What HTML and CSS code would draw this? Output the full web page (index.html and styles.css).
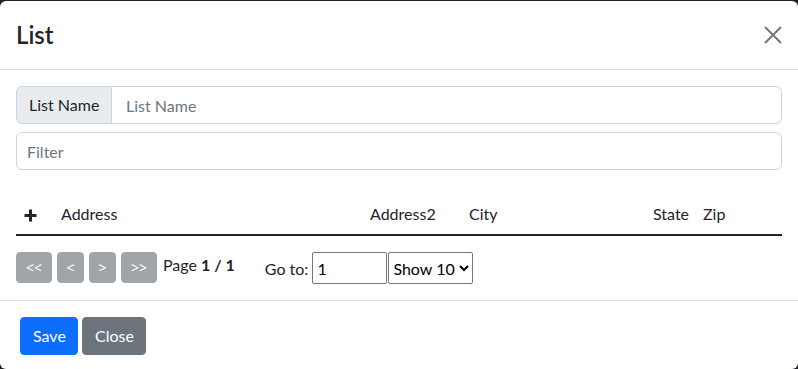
FILE: index.html
```html
<!DOCTYPE html>
<html lang="en">
<head>
<meta charset="utf-8">
<title>List</title>
<link rel="stylesheet" href="styles.css">
</head>
<body>
<div class="modal">
  <div class="modal-header">
    <h4 class="modal-title">List</h4>
    <button class="btn-close" type="button" aria-label="Close">
      <svg width="18" height="18" viewBox="0 0 18 18"><path d="M1 1L17 17M17 1L1 17" stroke="#757575" stroke-width="2" fill="none"/></svg>
    </button>
  </div>
  <div class="modal-body">
    <div class="input-group">
      <span class="input-group-text">List Name</span>
      <input class="form-control grow" type="text" placeholder="List Name">
    </div>
    <input class="form-control filter" type="text" placeholder="Filter">
    <table class="table">
      <thead>
        <tr>
          <th class="c-add"><svg class="plus" width="13" height="13" viewBox="0 0 13 13"><path d="M6.5 0.5V12.5M0.5 6.5H12.5" stroke="#212529" stroke-width="3" fill="none"/></svg></th>
          <th class="c-address">Address</th>
          <th class="c-address2">Address2</th>
          <th class="c-city">City</th>
          <th class="c-state">State</th>
          <th class="c-zip">Zip</th>
        </tr>
      </thead>
    </table>
    <div class="pager">
      <button class="btn-sm" disabled>&lt;&lt;</button>
      <button class="btn-sm" disabled>&lt;</button>
      <button class="btn-sm" disabled>&gt;</button>
      <button class="btn-sm" disabled>&gt;&gt;</button>
      <span class="page-info">Page <b>1 / 1</b></span>
      <label class="goto">Go to:<input class="goto-input" type="text" value="1"></label>
      <select class="show-select"><option>Show 10</option><option>Show 25</option></select>
    </div>
  </div>
  <div class="modal-footer">
    <button class="btn btn-primary">Save</button>
    <button class="btn btn-secondary">Close</button>
  </div>
</div>
</body>
</html>
```
FILE: styles.css
```css
* { box-sizing: border-box; }
html, body { margin: 0; padding: 0; }
body {
  background: #1d2126;
  font-family: Lato, "Liberation Sans", sans-serif;
  font-size: 16px;
  line-height: 1.5;
  color: #212529;
  padding-top: 1px;
  height: 369px;
  overflow: hidden;
}
.modal {
  background: #fff;
  border-radius: 6px;
  height: 368px;
}
.modal-header {
  display: flex;
  align-items: center;
  justify-content: space-between;
  padding: 16px;
  border-bottom: 1px solid #dee2e6;
  height: 69px;
}
.modal-title {
  margin: 0;
  font-size: 24px;
  font-weight: 600;
  line-height: 36px;
}
.btn-close {
  background: none;
  border: 0;
  padding: 0;
  width: 18px;
  height: 18px;
  display: flex;
}
.modal-body {
  padding: 16px;
}
.input-group {
  display: flex;
}
.input-group-text {
  background: #e9ecef;
  border: 1px solid #ced4da;
  border-radius: 6px 0 0 6px;
  padding: 6px 12px;
  height: 38px;
  width: 96px;
  white-space: nowrap;
  font-size: 16px;
  line-height: 24px;
}
.form-control {
  font-family: inherit;
  font-size: 16px;
  line-height: 24px;
  color: #212529;
  border: 1px solid #ced4da;
  border-radius: 6px;
  padding: 6px 14px;
  height: 38px;
  width: 100%;
  outline: none;
}
.form-control::placeholder { color: #6c757d; }
.grow {
  flex: 1;
  border-left: 0;
  border-radius: 0 6px 6px 0;
}
.filter {
  display: block;
  margin-top: 8px;
  padding-left: 10px;
}
.table {
  width: 100%;
  border-collapse: collapse;
  table-layout: fixed;
  margin-top: 24px;
  margin-bottom: 16px;
}
.table th {
  font-weight: 400;
  text-align: left;
  padding: 8px;
  line-height: 24px;
  border-bottom: 2px solid #212529;
  white-space: nowrap;
}
.c-add { width: 37px; }
.c-address { width: 309px; }
.c-address2 { width: 99px; }
.c-city { width: 184px; }
.c-state { width: 50px; }
.c-zip { width: 87px; }
.plus { display: block; margin-top: 2px; }
.pager {
  display: flex;
  align-items: flex-start;
  gap: 5px;
}
.btn-sm {
  font-family: "Noto Sans", sans-serif;
  font-size: 14px;
  line-height: 21px;
  padding: 4px 8px;
  height: 31px;
  border: 1px solid #a0a5aa;
  background: #a0a5aa;
  color: #fff;
  border-radius: 4px;
  min-width: 27px;
}
.btn-sm:first-child, .btn-sm:nth-child(4) { min-width: 36px; }
.page-info {
  margin-left: 1px;
  line-height: 24px;
  margin-top: 1px;
}
.goto {
  display: flex;
  align-items: center;
  margin-left: 25px;
  height: 32px;
  padding-top: 2px;
}
.goto-input {
  font-family: inherit;
  font-size: 16px;
  width: 75px;
  height: 32px;
  margin-left: 4px;
  border: 1px solid #767676;
  border-radius: 2px;
  padding: 1px 4px;
  color: #000;
  margin-top: -2px;
}
.show-select {
  font-family: inherit;
  font-size: 16px;
  width: 85px;
  height: 32px;
  border: 1px solid #767676;
  border-radius: 2px;
  background: #fff;
  color: #000;
  margin-left: -4px;
  padding: 0;
}
.modal-footer {
  border-top: 1px solid #dee2e6;
  padding: 16px 20px;
  display: flex;
  gap: 4px;
}
.btn {
  font-family: inherit;
  font-size: 16px;
  line-height: 24px;
  padding: 6px 12px;
  height: 38px;
  border-radius: 4px;
  border: 1px solid transparent;
  color: #fff;
}
.btn-primary { background: #0d6efd; border-color: #0d6efd; width: 58px; }
.btn-secondary { background: #6c757d; border-color: #6c757d; width: 64px; }
```
